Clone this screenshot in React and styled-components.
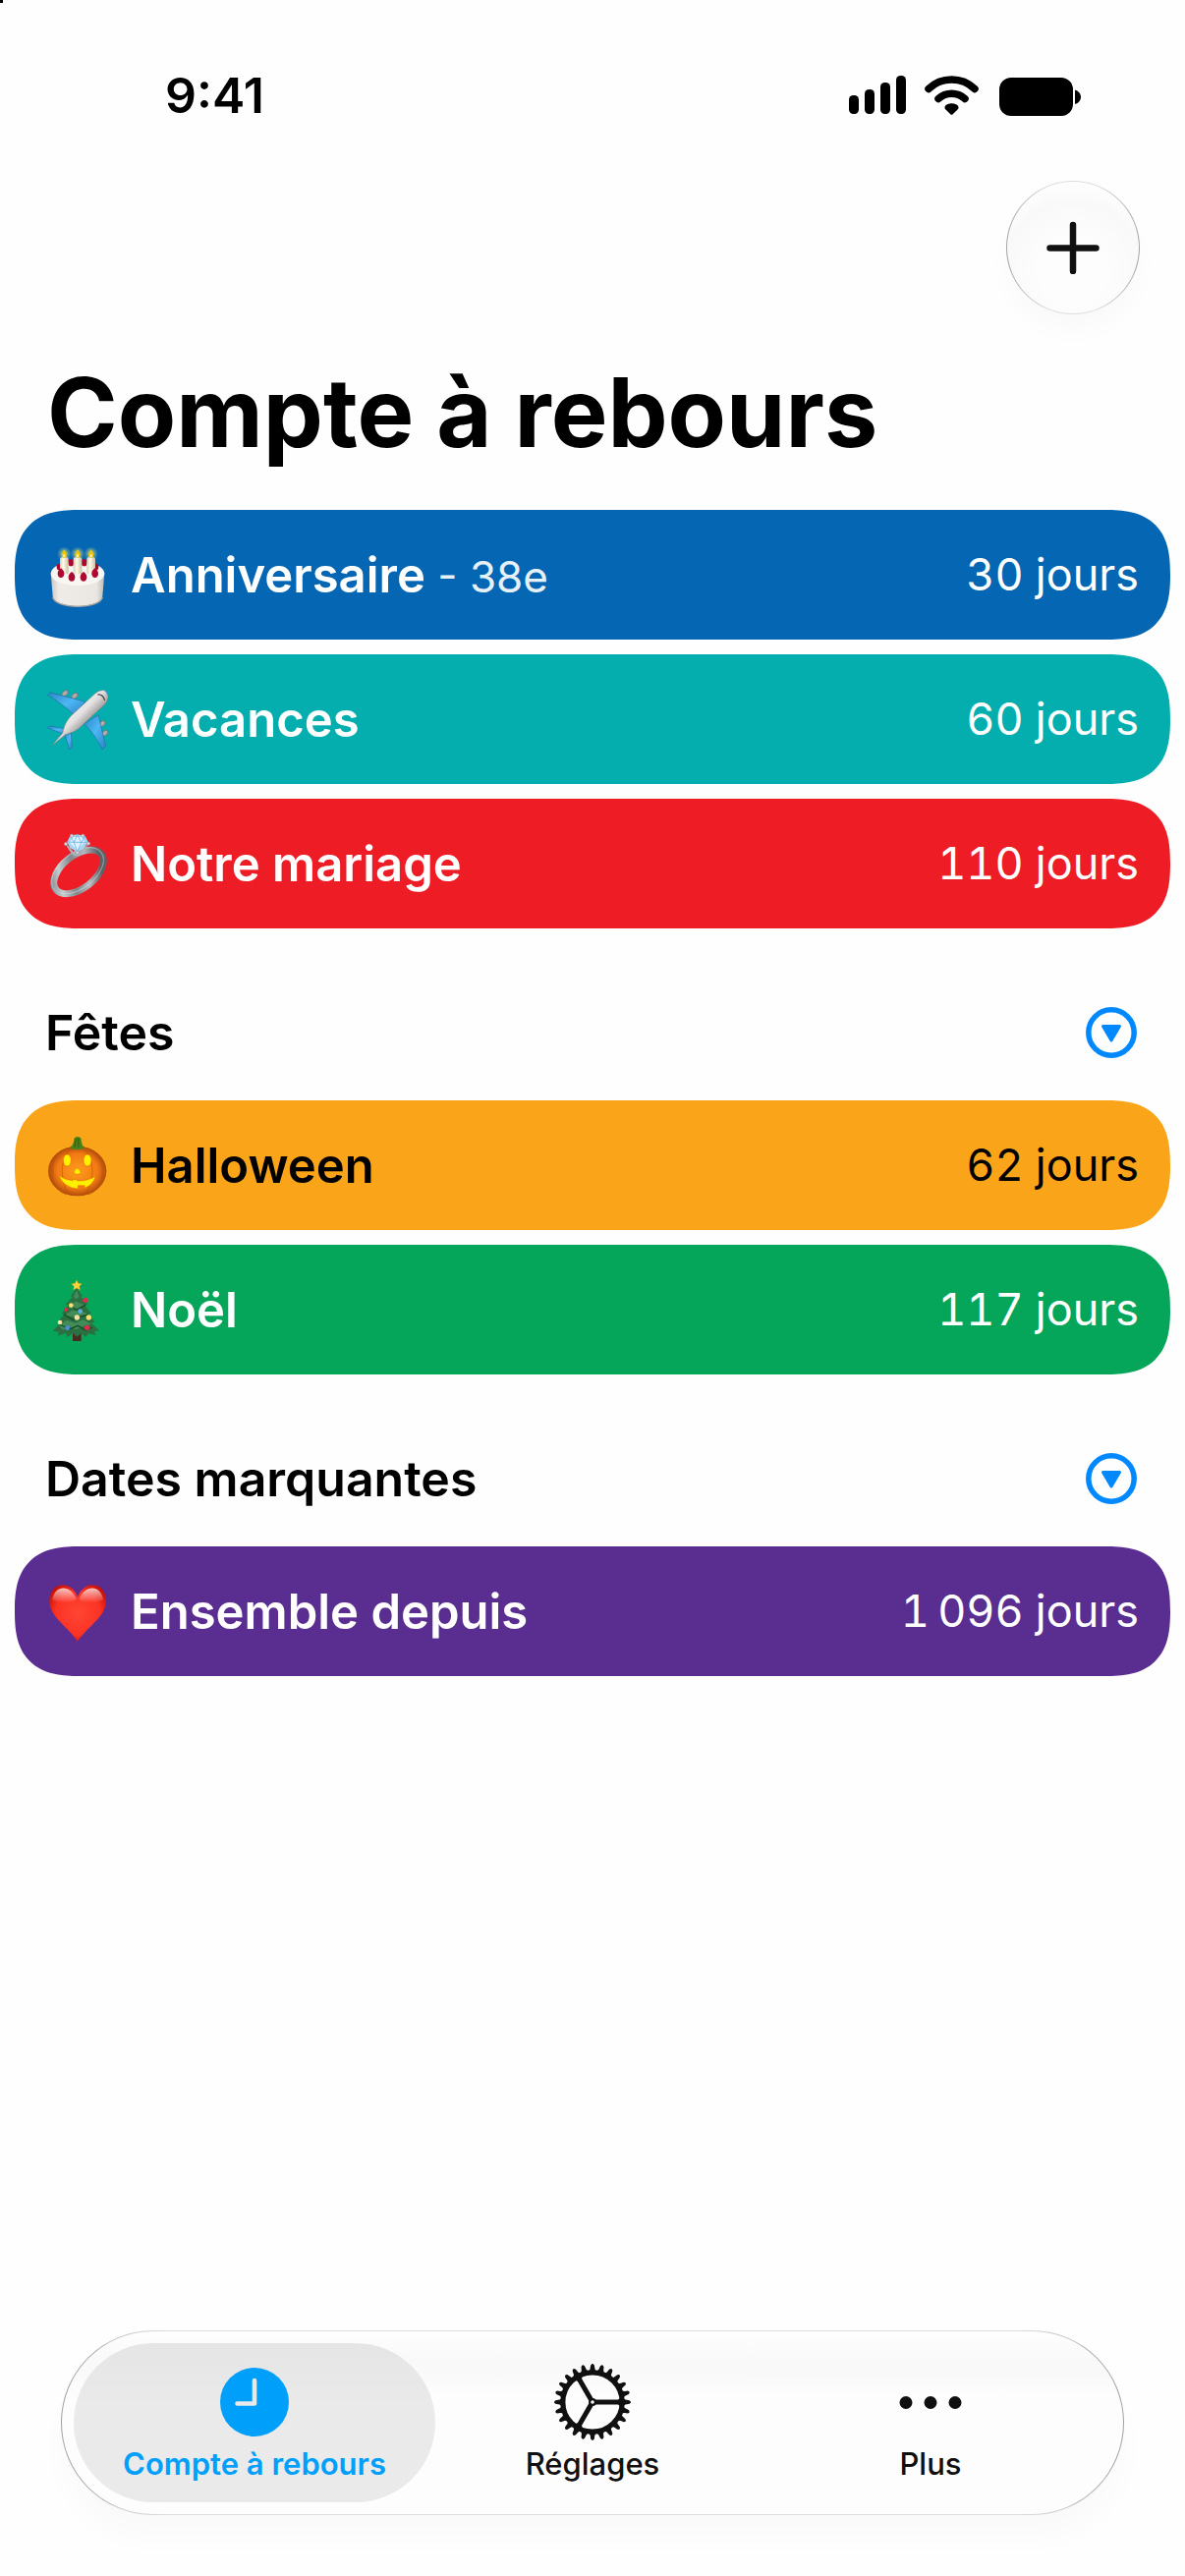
import React, { useState } from "react";
import styled, { createGlobalStyle } from "styled-components";

const GlobalStyle = createGlobalStyle`
  * {
    box-sizing: border-box;
  }

  body {
    margin: 0;
    background: #fefefe;
    color: #000;
    font-family: Inter, "Liberation Sans", sans-serif;
  }

  button {
    border: none;
    padding: 0;
    background: none;
    font: inherit;
    color: inherit;
    cursor: pointer;
  }
`;

const Screen = styled.div`
  display: flex;
  flex-direction: column;
  min-height: 100vh;
`;

const CornerMark = styled.span`
  position: absolute;
  top: 0;
  left: 0;
  width: 3px;
  height: 3px;
  background: #000;
`;

const StatusBar = styled.div`
  display: flex;
  align-items: center;
  justify-content: space-between;
  padding: 66px 106px 0 168px;
`;

const Time = styled.span`
  font-size: 50px;
  line-height: 62px;
  font-weight: 600;
`;

const StatusIcons = styled.div`
  display: flex;
  align-items: center;
`;

const Toolbar = styled.div`
  display: flex;
  justify-content: flex-end;
  padding: 56px 46px 0;
`;

const AddButton = styled.button`
  display: flex;
  align-items: center;
  justify-content: center;
  width: 136px;
  height: 136px;
  border: 1px solid transparent;
  border-radius: 50%;
  background:
    radial-gradient(circle at 50% 68%, #fdfdfd 30%, #f9f9f9 62%, #fefefe 80%)
      padding-box,
    linear-gradient(90deg, #a4a4a4, #dedede 35%, #dedede 65%, #a4a4a4)
      border-box;
  box-shadow: 0 18px 26px rgba(0, 0, 0, 0.02);
`;

const Title = styled.h1`
  margin: 40px 0 39px;
  padding: 0 48px;
  font-size: 97px;
  line-height: 120px;
  font-weight: 700;
`;

const SectionHeader = styled.div`
  display: flex;
  align-items: center;
  justify-content: space-between;
  padding: 75px 46px 38px;
`;

const SectionTitle = styled.h2`
  margin: 0;
  font-size: 50px;
  line-height: 62px;
  font-weight: 600;
`;

const CollapseButton = styled.button`
  display: flex;
`;

const List = styled.ul`
  display: flex;
  flex-direction: column;
  gap: 15px;
  margin: 0;
  padding: 0 15px;
  list-style: none;
`;

const Row = styled.li`
  display: flex;
  align-items: center;
  gap: 22px;
  height: 132px;
  padding: 0 32px;
  border-radius: 54px;
  background: ${({ $color }) => $color};
  color: ${({ $dark }) => ($dark ? "#000" : "#fff")};

  @supports (corner-shape: squircle) {
    border-radius: 66px;
    corner-shape: superellipse(1.4);
  }
`;

const Name = styled.span`
  flex: 1;
  padding-top: 2px;
  font-size: 49px;
  line-height: 62px;
  font-weight: 600;
`;

const Note = styled.span`
  font-size: 44px;
  line-height: 1;
  font-weight: 400;
  opacity: 0.9;
`;

const Days = styled.span`
  font-size: 45px;
  line-height: 62px;
  font-variant-numeric: tabular-nums;
  white-space: nowrap;
`;

const TabBar = styled.nav`
  display: flex;
  margin: auto 62px 62px;
  padding: 12px;
  border: 1px solid transparent;
  border-radius: 94px;
  background:
    linear-gradient(#fefefe, #f9f9f9 16%, #f9f9f9 20%, #fdfdfd 36%, #fdfdfd)
      padding-box,
    linear-gradient(90deg, #a0a0a0, #dedede 10%, #dedede 90%, #a0a0a0)
      border-box;
  box-shadow: 0 24px 30px rgba(0, 0, 0, 0.02);
`;

const Tab = styled.button`
  display: flex;
  flex: 1;
  flex-direction: column;
  align-items: center;
  gap: 5px;
  height: 162px;
  padding-top: 20px;
  border-radius: 81px;
  background: ${({ $active }) =>
    $active ? "linear-gradient(#e5e5e5, #eaeaea 40%)" : "none"};
  color: ${({ $active }) => ($active ? "#00a0fa" : "#101010")};
  font-weight: ${({ $active }) => ($active ? 600 : 500)};

  & + & {
    margin-left: -24px;
  }
`;

const TabLabel = styled.span`
  font-size: 31px;
  line-height: 36px;
`;

const SignalIcons = () => (
  <svg width="236" height="42" viewBox="0 0 236 42" aria-hidden="true">
    <rect x="0" y="21" width="10" height="19" rx="4.5" />
    <rect x="16" y="15" width="10" height="25" rx="4.5" />
    <rect x="32" y="8" width="10" height="32" rx="4.5" />
    <rect x="48" y="1" width="10" height="39" rx="4.5" />
    <g fill="none" stroke="#000" strokeWidth="7.5" strokeLinecap="round">
      <path d="M81 14.5a34 34 0 0 1 47 0" />
      <path d="M91 24.5a20 20 0 0 1 27 0" />
    </g>
    <path d="M97.5 33.5c0-1.5.8-2.4 2-3a12 12 0 0 1 10 0c1.2.6 2 1.5 2 3 0 1-.4 1.6-1.2 2.3l-4.6 4.4c-.8.7-1.6.7-2.4 0l-4.6-4.4c-.8-.7-1.2-1.3-1.2-2.3z" />
    <rect x="153" y="3" width="75" height="39" rx="12" />
    <path d="M230 15.5c3.6 1 6 4 6 7.3s-2.4 6.3-6 7.3z" />
  </svg>
);

const PlusIcon = () => (
  <svg width="54" height="54" viewBox="0 0 54 54" aria-hidden="true">
    <path
      d="M27 4v47M3.5 27.5h47"
      stroke="#101010"
      strokeWidth="6.5"
      strokeLinecap="round"
    />
  </svg>
);

const CollapseIcon = () => (
  <svg width="58" height="52" viewBox="0 0 58 52" aria-hidden="true">
    <circle
      cx="29"
      cy="26"
      r="23.2"
      fill="none"
      stroke="#0088ff"
      strokeWidth="5.5"
    />
    <path
      d="M20.5 19.5h17L29 34z"
      fill="#0088ff"
      stroke="#0088ff"
      strokeWidth="3"
      strokeLinejoin="round"
    />
  </svg>
);

const ClockIcon = () => (
  <svg width="80" height="80" viewBox="0 0 80 80" aria-hidden="true">
    <circle cx="40" cy="40" r="35" fill="currentColor" />
    <path
      d="M40 18v23.5H22.5"
      fill="none"
      stroke="#e9e9e9"
      strokeWidth="4.6"
      strokeLinecap="round"
      strokeLinejoin="round"
    />
  </svg>
);

const TEETH = Array.from({ length: 24 }, (_, i) => i * 15);

const GearIcon = () => (
  <svg width="80" height="80" viewBox="0 0 80 80" aria-hidden="true">
    {TEETH.map((angle) => (
      <path
        key={angle}
        d="M35.5 9.5Q38 7 38.2 2.4Q40-.4 41.8 2.4Q42 7 44.5 9.5z"
        fill="currentColor"
        transform={`rotate(${angle} 40 40)`}
      />
    ))}
    <g fill="none" stroke="currentColor">
      <circle cx="40" cy="40" r="30.2" strokeWidth="5.2" />
      {[0, 120, 240].map((angle) => (
        <g key={angle} transform={`rotate(${angle} 40 40)`}>
          <path d="M43 40H69" strokeWidth="5" />
          <path d="M64 40L69 34.5V45.5z" fill="currentColor" stroke="none" />
        </g>
      ))}
      <circle cx="40" cy="40" r="2.9" strokeWidth="2.2" />
    </g>
  </svg>
);

const MoreIcon = () => (
  <svg width="80" height="80" viewBox="0 0 80 80" aria-hidden="true">
    <g fill="currentColor">
      <circle cx="15" cy="40.5" r="6.5" />
      <circle cx="40" cy="40.5" r="6.5" />
      <circle cx="65" cy="40.5" r="6.5" />
    </g>
  </svg>
);

const Emoji = ({ children }) => (
  <svg width="64" height="72" viewBox="51 27 192 216" aria-hidden="true">
    {children}
  </svg>
);

const Cake = () => (
  <Emoji>
    <defs>
      <linearGradient id="cakeSide">
        <stop offset="0" stopColor="#c9c5be" />
        <stop offset="0.15" stopColor="#efece8" />
        <stop offset="0.85" stopColor="#eae7e3" />
        <stop offset="1" stopColor="#bdb9b2" />
      </linearGradient>
      <linearGradient id="candle">
        <stop offset="0" stopColor="#d8cfb4" />
        <stop offset="0.4" stopColor="#fffbea" />
        <stop offset="1" stopColor="#c9c0a4" />
      </linearGradient>
      <radialGradient id="glow">
        <stop offset="0" stopColor="#ffe97a" stopOpacity="0.9" />
        <stop offset="1" stopColor="#a8d890" stopOpacity="0" />
      </radialGradient>
    </defs>
    <path
      d="M65 130L71 200C76 241 218 241 223 200L229 130z"
      fill="url(#cakeSide)"
    />
    <path
      d="M71 204C78 241 216 241 223 204"
      fill="none"
      stroke="#aaa69e"
      strokeWidth="4"
    />
    <ellipse cx="147" cy="131" rx="82" ry="37" fill="#f8f6f3" />
    <g fill="#a8072f">
      <ellipse cx="127" cy="98" rx="9" ry="11" />
      <ellipse cx="167" cy="98" rx="9" ry="11" />
      <ellipse cx="90" cy="111" rx="7" ry="10" />
      <ellipse cx="204" cy="111" rx="7" ry="10" />
    </g>
    {[106, 147, 188].map((x) => (
      <g key={x}>
        <circle cx={x} cy="71" r="22" fill="url(#glow)" />
        <rect
          x={x - 13}
          y="82"
          width="26"
          height="51"
          rx="5"
          fill="url(#candle)"
        />
        <path
          d={`M${x} 58q8 10 8 17t-8 9q-8-2-8-9t8-17`}
          fill="#f5c400"
        />
        <ellipse cx={x} cy="77" rx="3" ry="5" fill="#fff6c0" />
      </g>
    ))}
    <g fill="#ad0832">
      <path d="M96 115q11 8 10 18-1 11-10 11t-10-11q-1-10 10-18" />
      <path d="M129 126q11 8 10 18-1 11-10 11t-10-11q-1-10 10-18" />
      <path d="M165 126q11 8 10 18-1 11-10 11t-10-11q-1-10 10-18" />
      <path d="M200 115q11 8 10 18-1 11-10 11t-10-11q-1-10 10-18" />
    </g>
  </Emoji>
);

const Plane = () => (
  <Emoji>
    <defs>
      <linearGradient id="fuselage" x1="0.3" y1="0.3" x2="0.65" y2="0.65">
        <stop offset="0" stopColor="#f8f8f8" />
        <stop offset="0.5" stopColor="#e2dfdf" />
        <stop offset="1" stopColor="#8d8888" />
      </linearGradient>
      <linearGradient id="wing" x1="0" y1="0" x2="1" y2="1">
        <stop offset="0" stopColor="#2b86c4" />
        <stop offset="0.5" stopColor="#4db6f4" />
        <stop offset="1" stopColor="#2a82c4" />
      </linearGradient>
    </defs>
    <g fill="#b3abab" stroke="#6d6868" strokeWidth="2">
      <ellipse cx="108" cy="56" rx="11" ry="7" transform="rotate(-42 108 56)" />
      <ellipse cx="138" cy="64" rx="11" ry="7" transform="rotate(-42 138 64)" />
      <ellipse cx="222" cy="149" rx="11" ry="7" transform="rotate(-42 222 149)" />
      <ellipse cx="230" cy="178" rx="11" ry="7" transform="rotate(-42 230 178)" />
    </g>
    <g fill="url(#wing)" stroke="#1a5f91" strokeWidth="1.5">
      <path d="M56 62L63 53L170 82L136 123C113 98 82 77 56 62z" />
      <path d="M210 122L233 217L223 228C206 196 190 170 166 149z" />
      <path d="M56 161L64 156L114 166L104 183C90 172 70 169 56 161z" />
      <path d="M106 183L127 177L130 220L122 228C118 210 113 196 106 183z" />
    </g>
    <path
      d="M238 54C234 43 215 45 200 57L128 124C112 141 104 160 102 176L68 216L110 182C127 178 146 170 161 154L230 90C240 79 242 65 238 54z"
      fill="url(#fuselage)"
      stroke="#777"
      strokeWidth="1.5"
    />
    <path
      d="M208 60q16-2 22 18"
      fill="none"
      stroke="#444"
      strokeWidth="3.5"
    />
    <path d="M230 48q9 3 8 13" fill="none" stroke="#2f9be0" strokeWidth="4" />
  </Emoji>
);

const Ring = () => (
  <Emoji>
    <defs>
      <linearGradient id="band" x1="0" y1="0" x2="1" y2="0.3">
        <stop offset="0" stopColor="#6f767b" />
        <stop offset="0.25" stopColor="#c7cccf" />
        <stop offset="0.5" stopColor="#7f868b" />
        <stop offset="0.75" stopColor="#b4babe" />
        <stop offset="1" stopColor="#5c6368" />
      </linearGradient>
    </defs>
    <ellipse
      cx="150"
      cy="160"
      rx="88"
      ry="50"
      fill="none"
      stroke="url(#band)"
      strokeWidth="21"
      transform="rotate(-38 150 160)"
    />
    <ellipse
      cx="147"
      cy="157"
      rx="91"
      ry="54"
      fill="none"
      stroke="#dfe3e6"
      strokeWidth="3"
      opacity="0.5"
      transform="rotate(-38 147 157)"
    />
    <path
      d="M108 72l14 24 12 14 18 2 12-12 18-28-14 12-10 18h-22l-14-18z"
      fill="#aab2b8"
    />
    <path d="M124 50l22-4 24 5 9 18-12 17-21 14-22-13-9-18z" fill="#a6d6f4" />
    <path d="M132 55l28-1 9 16-24 23-22-22z" fill="#dcf3ff" />
    <path
      d="M124 50l12 20 10-24 12 25 12-20M115 69l21 1 10 30 12-29 21-2M136 70h22"
      fill="none"
      stroke="#6fb4e4"
      strokeWidth="2.5"
    />
    <g fill="#d5dade" stroke="#858c92" strokeWidth="1.5">
      <circle cx="129" cy="50" r="5" />
      <circle cx="163" cy="50" r="5" />
      <circle cx="111" cy="75" r="5" />
      <circle cx="180" cy="74" r="5" />
      <circle cx="146" cy="101" r="5" />
    </g>
  </Emoji>
);

const Pumpkin = () => (
  <Emoji>
    <defs>
      <radialGradient id="pumpkin">
        <stop offset="0" stopColor="#ff9d1c" />
        <stop offset="0.7" stopColor="#f27a13" />
        <stop offset="1" stopColor="#b04a0a" />
      </radialGradient>
    </defs>
    <ellipse cx="146" cy="153" rx="89" ry="76" fill="url(#pumpkin)" />
    <g fill="none" stroke="#b8500a" strokeWidth="3" opacity="0.6">
      <path d="M125 82C50 92 55 210 112 224" />
      <path d="M134 82C88 96 90 210 132 228" />
      <path d="M167 82C242 92 237 210 180 224" />
      <path d="M158 82C204 96 202 210 160 228" />
    </g>
    <path
      d="M127 83q-5-5 3-7l6-16q-2-10 10-12 14 1 12 12l4 16q8 2 5 8-9 5-12 1-6 6-12 1-8 4-16-3"
      fill="#4d8117"
    />
    <path
      d="M138 80l4-26M150 80l-1-26"
      stroke="#2f5c0c"
      strokeWidth="3"
      fill="none"
    />
    <g fill="#fff000" stroke="#d96a00" strokeWidth="1.5">
      <ellipse cx="115" cy="120" rx="12" ry="18" />
      <ellipse cx="177" cy="120" rx="12" ry="18" />
      <path d="M146 143q12 10 11 17-11 6-22 0-1-7 11-17" />
      <path d="M90 166q17 14 42 16v-3h14v4q36 0 56-15-8 28-34 37v-8h-20v10q-44-3-58-41" />
    </g>
  </Emoji>
);

const Tree = () => (
  <Emoji>
    <path d="M132 200h26v31h-26z" fill="#4a2c1d" />
    <path
      d="M144 68L162 94 156 95 178 118 168 121 188 146 177 148 199 172 189 176 213 199 198 202 203 214 180 208 172 219 157 207 145 218 133 207 116 219 110 207 86 215 90 203 71 200 94 176 84 174 108 148 98 146 119 121 109 120 131 97 126 94z"
      fill="#2b7040"
    />
    <path
      d="M144 75L152 97 141 103 134 96zM121 124l20-14 25 9-18 12-18 2zM106 153l24-16 34 5 14 7-24 10-24-3zM90 184l24-17 26 9 24-10 26 14-22 4-26 12-22-8-18 9z"
      fill="#438c57"
    />
    <path
      d="M122 122l22 14 28-16M104 149l28 17 24-10 26-6M90 180l34 14 24-10 24 15 20-10"
      fill="none"
      stroke="#16502b"
      strokeWidth="4"
    />
    <path
      d="M144 45l5 10 11 1-8 8 3 11-11-6-10 6 2-11-8-8 11-1z"
      fill="#ffd23b"
      stroke="#c99b15"
      strokeWidth="1"
    />
    <g>
      <circle cx="171" cy="106" r="8" fill="#df2b4d" />
      <circle cx="111" cy="135" r="6" fill="#df2b4d" />
      <circle cx="176" cy="190" r="8" fill="#df2b4d" />
      <circle cx="127" cy="122" r="7" fill="#f4df70" />
      <circle cx="181" cy="159" r="8" fill="#f4df70" />
      <circle cx="145" cy="159" r="8" fill="#f5e3a6" />
      <circle cx="93" cy="174" r="7" fill="#f5e3a6" />
      <circle cx="155" cy="140" r="7" fill="#5ea8e8" />
      <circle cx="116" cy="191" r="7" fill="#4a8fe0" />
    </g>
  </Emoji>
);

const Heart = () => (
  <Emoji>
    <defs>
      <radialGradient id="heart" cx="0.5" cy="0.5" r="0.6">
        <stop offset="0" stopColor="#ff4534" />
        <stop offset="0.65" stopColor="#fb3324" />
        <stop offset="1" stopColor="#c40d05" />
      </radialGradient>
      <linearGradient id="shine" x1="0" y1="0" x2="0" y2="1">
        <stop offset="0" stopColor="#fff" stopOpacity="0.75" />
        <stop offset="1" stopColor="#fff" stopOpacity="0" />
      </linearGradient>
    </defs>
    <path
      d="M147 92C130 38 61 42 61 105C61 152 120 184 147 227C174 184 234 152 234 105C234 42 164 38 147 92z"
      fill="url(#heart)"
    />
    <path
      d="M143 98C126 52 76 54 70 100C88 112 130 112 143 98zM152 98C169 52 219 54 225 100C207 112 165 112 152 98z"
      fill="url(#shine)"
    />
  </Emoji>
);

const sections = [
  {
    id: "main",
    items: [
      {
        name: "Anniversaire",
        note: "- 38e",
        days: "30 jours",
        color: "#0566b3",
        Icon: Cake,
      },
      { name: "Vacances", days: "60 jours", color: "#05aeae", Icon: Plane },
      { name: "Notre mariage", days: "110 jours", color: "#ee1c25", Icon: Ring },
    ],
  },
  {
    id: "holidays",
    title: "Fêtes",
    items: [
      {
        name: "Halloween",
        days: "62 jours",
        color: "#faa41a",
        dark: true,
        Icon: Pumpkin,
      },
      { name: "Noël", days: "117 jours", color: "#05a55a", Icon: Tree },
    ],
  },
  {
    id: "milestones",
    title: "Dates marquantes",
    items: [
      {
        name: "Ensemble depuis",
        days: "1\u202f096 jours",
        color: "#5a2d91",
        Icon: Heart,
      },
    ],
  },
];

const tabs = [
  { label: "Compte à rebours", Icon: ClockIcon },
  { label: "Réglages", Icon: GearIcon },
  { label: "Plus", Icon: MoreIcon },
];

const Section = ({ title, items }) => {
  const [open, setOpen] = useState(true);

  return (
    <section>
      {title && (
        <SectionHeader>
          <SectionTitle>{title}</SectionTitle>
          <CollapseButton
            aria-label={title}
            aria-expanded={open}
            onClick={() => setOpen((prev) => !prev)}
          >
            <CollapseIcon />
          </CollapseButton>
        </SectionHeader>
      )}
      {open && (
        <List>
          {items.map(({ name, note, days, color, dark, Icon }) => (
            <Row key={name} $color={color} $dark={dark}>
              <Icon />
              <Name>
                {name} {note && <Note>{note}</Note>}
              </Name>
              <Days>{days}</Days>
            </Row>
          ))}
        </List>
      )}
    </section>
  );
};

const App = () => {
  const [active, setActive] = useState(tabs[0].label);

  return (
    <Screen>
      <GlobalStyle />
      <CornerMark />
      <StatusBar>
        <Time>9:41</Time>
        <StatusIcons>
          <SignalIcons />
        </StatusIcons>
      </StatusBar>
      <Toolbar>
        <AddButton aria-label="Ajouter">
          <PlusIcon />
        </AddButton>
      </Toolbar>
      <main>
        <Title>Compte à rebours</Title>
        {sections.map((section) => (
          <Section key={section.id} {...section} />
        ))}
      </main>
      <TabBar>
        {tabs.map(({ label, Icon }) => (
          <Tab
            key={label}
            $active={label === active}
            onClick={() => setActive(label)}
          >
            <Icon />
            <TabLabel>{label}</TabLabel>
          </Tab>
        ))}
      </TabBar>
    </Screen>
  );
};

export default App;
